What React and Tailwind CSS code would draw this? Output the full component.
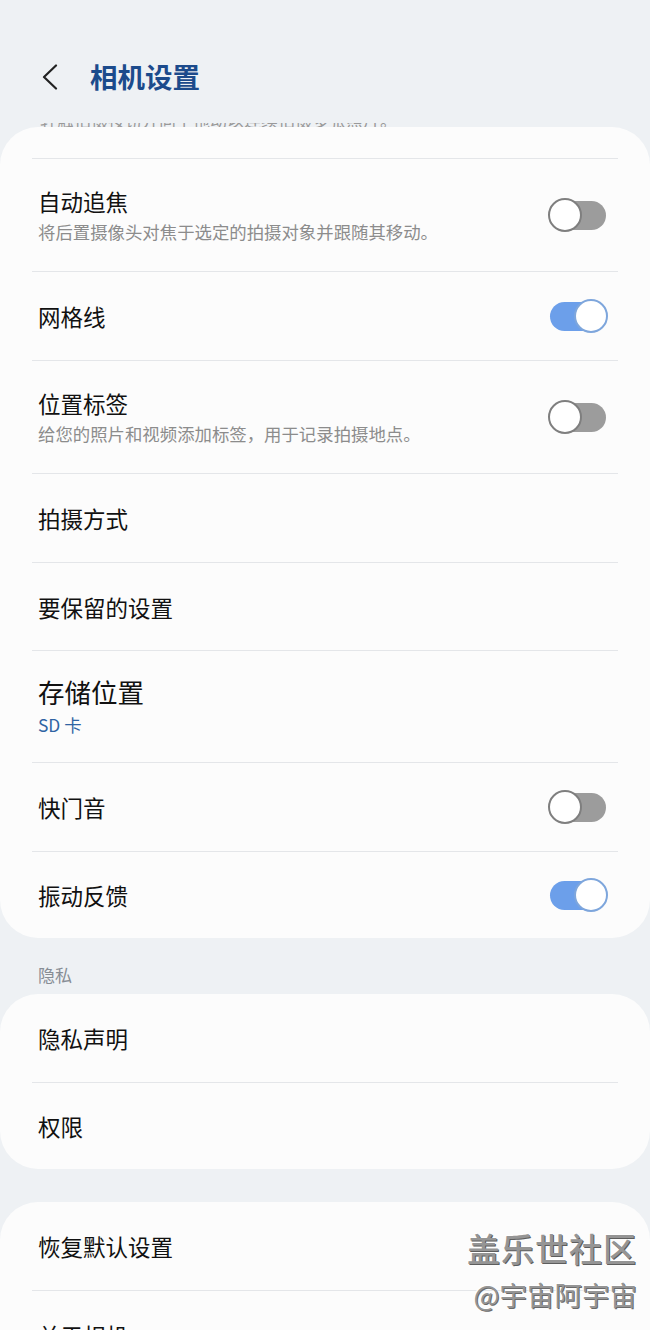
import React from 'react';

const Toggle = ({ on }) => (
  <div className="relative w-[60px] h-[34px] flex items-center shrink-0">
    <div
      className={
        on
          ? 'absolute left-[2px] right-[2px] h-[29px] rounded-full bg-[#6c9fea]'
          : 'absolute left-[2px] right-[2px] h-[29px] rounded-full bg-[#9c9c9c]'
      }
    />
    <div
      className={
        on
          ? 'absolute right-0 w-[34px] h-[34px] rounded-full bg-white border-2 border-[#7ea6dc]'
          : 'absolute left-0 w-[34px] h-[34px] rounded-full bg-white border-2 border-[#7f7f7f]'
      }
    />
  </div>
);

const Divider = () => <div className="h-[1px] mx-[32px] bg-[#e4e6e9]" />;

const Row = ({ title, sub, toggle, height, big, blue }) => (
  <div className={`flex items-center pl-[38px] pr-[42px] ${height}`}>
    <div className="flex-1 flex flex-col">
      <span className={big ? 'text-[26.5px] leading-[34px] text-[#111]' : 'text-[22.5px] leading-[30px] text-[#111]'}>
        {title}
      </span>
      {sub && (
        <span className="mt-[3px] text-[17.4px] leading-[26px] text-[#8c8c8c]">{sub}</span>
      )}
      {blue && (
        <span className="mt-[3px] text-[17.4px] leading-[26px] text-[#2f64a3]">{blue}</span>
      )}
    </div>
    {toggle !== undefined && <Toggle on={toggle} />}
  </div>
);

export default function App() {
  return (
    <div
      className="relative w-[650px] h-[1330px] overflow-hidden bg-[#eef1f4]"
      style={{ fontFamily: '"Noto Sans CJK SC", "Noto Sans", sans-serif' }}
    >
      {/* header */}
      <div className="h-[123px] pt-[60px]">
        <div className="flex items-center h-[34px] pl-[41px]">
          <svg width="18" height="26" viewBox="0 0 18 26" fill="none">
            <path d="M15 1.5 L3 13 L15 24.5" stroke="#222" strokeWidth="2.2" strokeLinecap="round" strokeLinejoin="round" />
          </svg>
          <h1 className="ml-[31px] text-[27.5px] font-bold text-[#1c4b8c] leading-none">相机设置</h1>
        </div>
      </div>

      {/* scrolled-away description, only its bottom edge shows */}
      <div className="h-[4px] overflow-hidden flex items-end pl-[40px]">
        <span className="text-[17px] leading-[14px] text-[#9a9a9a] whitespace-nowrap">
          轻触拍摄按钮并向下拖动以连续拍摄多张照片。
        </span>
      </div>

      <div className="bg-[#fcfcfc] rounded-[38px]">
        <div className="h-[31px]" />
        <Divider />
        <Row height="h-[112px]" title="自动追焦" sub="将后置摄像头对焦于选定的拍摄对象并跟随其移动。" toggle={false} />
        <Divider />
        <Row height="h-[88px]" title="网格线" toggle={true} />
        <Divider />
        <Row height="h-[112px]" title="位置标签" sub="给您的照片和视频添加标签，用于记录拍摄地点。" toggle={false} />
        <Divider />
        <Row height="h-[88px]" title="拍摄方式" />
        <Divider />
        <Row height="h-[87px]" title="要保留的设置" />
        <Divider />
        <Row height="h-[111px]" title="存储位置" big blue="SD 卡" />
        <Divider />
        <Row height="h-[88px]" title="快门音" toggle={false} />
        <Divider />
        <Row height="h-[86px]" title="振动反馈" toggle={true} />
      </div>

      <div className="h-[56px] pt-[26px] pl-[38px]">
        <span className="block text-[17px] leading-[22px] text-[#878d94]">隐私</span>
      </div>

      <div className="bg-[#fcfcfc] rounded-[38px]">
        <Row height="h-[88px]" title="隐私声明" />
        <Divider />
        <Row height="h-[86px]" title="权限" />
      </div>

      <div className="h-[33px]" />

      <div className="bg-[#fcfcfc] rounded-[38px]">
        <Row height="h-[88px]" title="恢复默认设置" />
        <Divider />
        <Row height="h-[88px]" title="关于相机" />
      </div>

      {/* watermark */}
      <div className="absolute right-[13px] top-[1226px] flex flex-col items-end">
        <span
          className="text-[33px] leading-[44px] font-medium text-[#959595] tracking-[1px]"
          style={{ textShadow: '1px 1px 0 #5d5d5d, -1px -1px 0 #fff' }}
        >
          盖乐世社区
        </span>
        <span
          className="text-[27.5px] leading-[36px] text-[#959595] mt-[6px]"
          style={{ textShadow: '1px 1px 0 #6a6a6a, -1px -1px 0 #fff' }}
        >
          @宇宙阿宇宙
        </span>
      </div>
    </div>
  );
}
